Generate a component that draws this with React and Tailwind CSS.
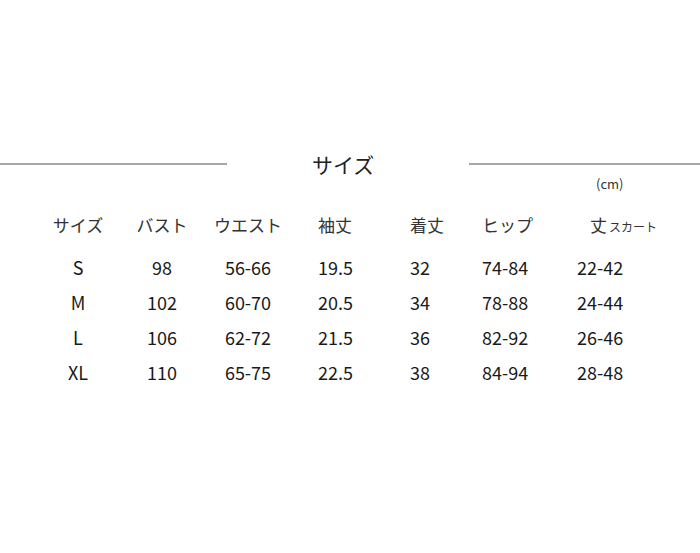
const cols = [
  'w-[76px] text-center',
  'w-[92px] text-center',
  'w-[80px] text-center',
  'w-[122px] pl-[30px]',
  'w-[72px]',
  'w-[95px]',
  'flex-1',
];

const headers = ['サイズ', 'バスト', 'ウエスト', '袖丈', '着丈', 'ヒップ'];

const rows = [
  ['S', '98', '56-66', '19.5', '32', '74-84', '22-42'],
  ['M', '102', '60-70', '20.5', '34', '78-88', '24-44'],
  ['L', '106', '62-72', '21.5', '36', '82-92', '26-46'],
  ['XL', '110', '65-75', '22.5', '38', '84-94', '28-48'],
];

export default function App() {
  return (
    <div className="w-[700px] h-[553px] bg-white text-[#1a1a1a] font-['Noto_Sans_CJK_JP',sans-serif] overflow-hidden">
      {/* タイトル */}
      <div className="flex items-center h-[26px] mt-[151px]">
        <div className="w-[227px] h-[2px] bg-[#a6a6a6]" />
        <h1 className="ml-[85px] text-[21px] leading-none font-normal text-[#222]">サイズ</h1>
        <div className="ml-[95px] flex-1 h-[2px] bg-[#a6a6a6]" />
      </div>
      <div className="h-[14px] pl-[596px] text-[13px] leading-[14px] text-[#333]">(cm)</div>

      {/* サイズ表 */}
      <div className="pl-[40px] mt-[19px]">
        <div className="flex items-center h-[30px] text-[17px] text-[#333]">
          {headers.map((h, i) => (
            <div key={h} className={cols[i]}>{h}</div>
          ))}
          <div className={cols[6] + ' pl-[13px]'}>
            丈<span className="text-[12px] ml-[2px]">スカート</span>
          </div>
        </div>
        <div className="mt-[10px]">
          {rows.map(r => (
            <div key={r[0]} className="flex items-center h-[35px] text-[18px]">
              {r.map((v, i) => (
                <div key={i} className={cols[i]}>{v}</div>
              ))}
            </div>
          ))}
        </div>
      </div>
    </div>
  );
}
